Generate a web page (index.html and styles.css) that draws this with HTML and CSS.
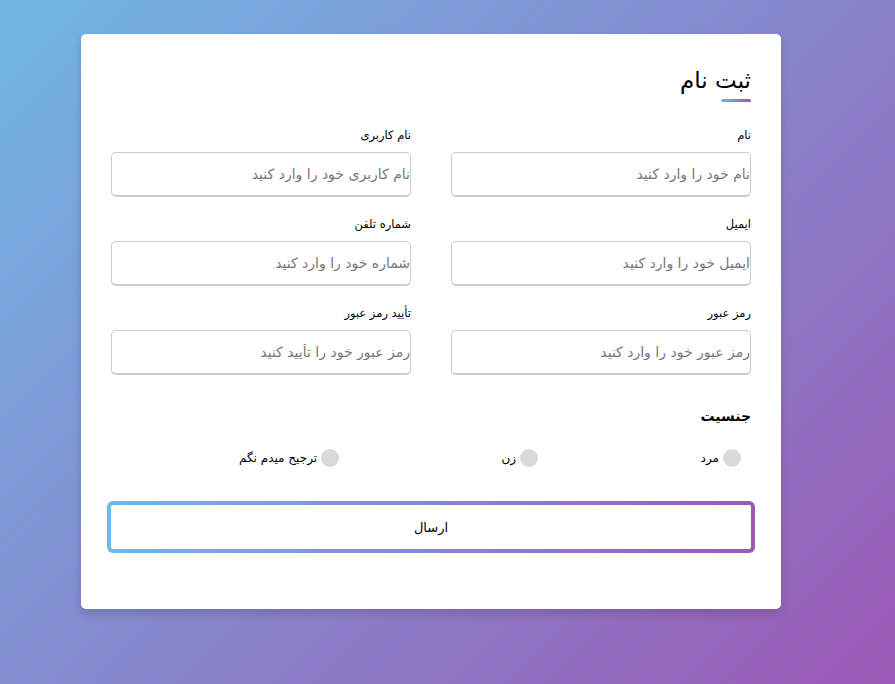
FILE: index.html
```html
<!DOCTYPE html>
<html lang="fa" dir="rtl">
<head>
    <meta charset="UTF-8">
    <meta name="viewport" content="width=device-width, initial-scale=1.0">
    <title>ثبت نام</title>
    <link rel="stylesheet" href="styles.css">
</head>
<body>
<div class="container">
    <div class="title">ثبت نام</div>
    <form action="#">
        <div class="user-details">
            <div class="input-box">
                <span class="details">نام</span>
                <input type="text" placeholder="نام خود را وارد کنید">
            </div>
            <div class="input-box">
                <span class="details">نام کاربری</span>
                <input type="text" placeholder="نام کاربری خود را وارد کنید">
            </div>
            <div class="input-box">
                <span class="details">ایمیل</span>
                <input type="text" placeholder="ایمیل خود را وارد کنید">
            </div>
            <div class="input-box">
                <span class="details">شماره تلفن</span>
                <input type="text" placeholder="شماره خود را وارد کنید">
            </div>
            <div class="input-box">
                <span class="details">رمز عبور</span>
                <input type="text" placeholder="رمز عبور خود را وارد کنید">
            </div>
            <div class="input-box">
                <span class="details">تأیید رمز عبور</span>
                <input type="text" placeholder="رمز عبور خود را تأیید کنید">
            </div>
        </div>
        <div class="gender-details">
            <span class="gender-title">جنسیت</span>
            <div class="category">
                <label class="option"><span class="dot"></span><span class="gender">مرد</span></label>
                <label class="option"><span class="dot"></span><span class="gender">زن</span></label>
                <label class="option"><span class="dot"></span><span class="gender">ترجیح میدم نگم</span></label>
            </div>
        </div>
        <div class="button">
            <button type="button">ارسال</button>
        </div>
    </form>
</div>
</body>
</html>
```

FILE: styles.css
```css
* {
    margin: 0;
    padding: 0;
    box-sizing: border-box;
}
body {
    font-family: Tahoma, "DejaVu Sans", sans-serif;
    min-height: 100vh;
    background: linear-gradient(135deg, #71b7e6, #9b59b6);
    padding: 34px 0 0 81px;
    direction: ltr;
}
.container {
    direction: rtl;
    width: 700px;
    background-color: #fff;
    padding: 25px 30px;
    border-radius: 5px;
    box-shadow: 0 5px 10px rgba(0, 0, 0, 0.15);
}
.title {
    position: relative;
    font-size: 23px;
    height: 44px;
    line-height: 42px;
    color: #000;
}
.title::before {
    content: '';
    position: absolute;
    right: 0;
    bottom: 1px;
    height: 3px;
    width: 30px;
    border-radius: 2px;
    background: linear-gradient(to right, #71b7e6, #9b59b6);
}
.user-details {
    display: flex;
    flex-wrap: wrap;
    justify-content: space-between;
    margin: 20px 0 12px 0;
}
.input-box {
    width: calc(100% / 2 - 20px);
    margin-bottom: 15px;
}
.details {
    display: block;
    font-size: 11.5px;
    line-height: 24px;
    margin-bottom: 5px;
    color: #000;
}
.input-box input {
    display: block;
    width: 100%;
    height: 45px;
    outline: none;
    font-family: inherit;
    font-size: 14px;
    padding: 0 0 0 15px;
    border-radius: 5px;
    border: 1px solid #ccc;
    border-bottom-width: 2px;
    background: #fff;
}
.input-box input::placeholder {
    color: #777;
}
.gender-title {
    display: block;
    font-size: 14px;
    font-weight: bold;
    line-height: 28px;
}
.category {
    display: flex;
    width: 80%;
    margin: 14px 0;
    justify-content: space-between;
}
.option {
    display: flex;
    align-items: center;
    height: 28px;
    font-size: 12px;
    cursor: pointer;
}
.dot {
    height: 18px;
    width: 18px;
    margin-right: 10px;
    margin-left: 4px;
    background: #d9d9d9;
    border-radius: 50%;
}
.button {
    margin: 29px -4px 31px -4px;
}
.button button {
    display: block;
    width: 100%;
    height: 52px;
    font-family: inherit;
    font-size: 13px;
    color: #000;
    border-radius: 6px;
    border: 4px solid transparent;
    background: linear-gradient(#fff, #fff) padding-box,
                linear-gradient(to right, #71b7e6, #9b59b6) border-box;
    cursor: pointer;
}
```
